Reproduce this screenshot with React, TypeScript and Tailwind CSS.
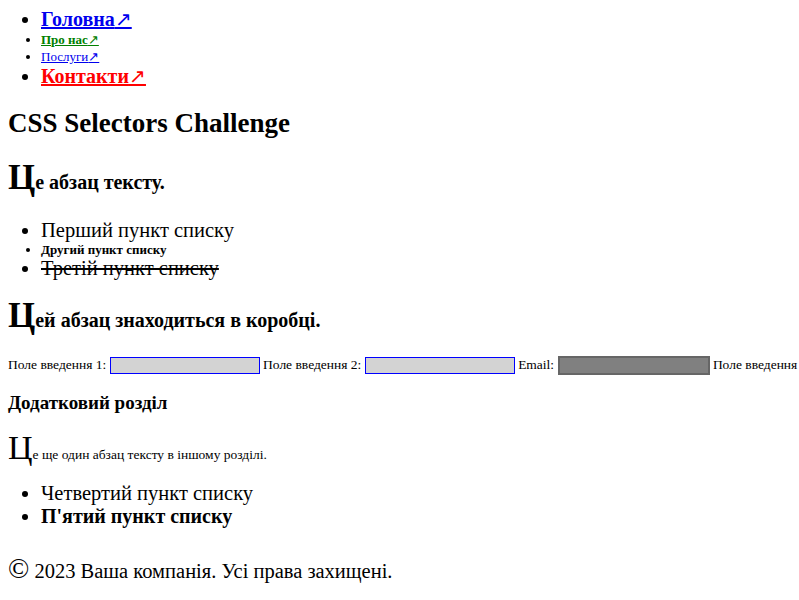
const serif = "font-['Liberation_Serif','Times_New_Roman',serif]";

function NavLink({ label, className }: { label: string; className: string }) {
  return (
    <a href="#" className={`underline ${className}`}>
      {label}
      <span className="font-normal">↗</span>
    </a>
  );
}

export default function App() {
  return (
    <div className={`${serif} p-2 text-black overflow-hidden`}>
      <nav>
        <ul className="list-disc pl-[33px]">
          <li className="text-[20px] leading-[23px] font-bold">
            <NavLink label="Головна" className="text-[#0000ee]" />
          </li>
          <li className="text-[13px] leading-[17px] font-bold">
            <NavLink label="Про нас" className="text-[#008000]" />
          </li>
          <li className="text-[13px] leading-[17px]">
            <NavLink label="Послуги" className="text-[#0000ee]" />
          </li>
          <li className="text-[20px] leading-[23px] font-bold">
            <NavLink label="Контакти" className="text-[#ff0000]" />
          </li>
        </ul>
      </nav>

      <h1 className="text-[27px] leading-[31px] font-bold mt-[20px] mb-[21px]">CSS Selectors Challenge</h1>

      <p className="text-[20px] leading-[23px] font-bold mb-[23px]">
        <span className="text-[35px] leading-[36px]">Ц</span>е абзац тексту.
      </p>

      <ul className="list-disc pl-[33px] mb-[18px]">
        <li className="text-[20.5px] leading-[23px]">Перший пункт списку</li>
        <li className="text-[13px] leading-[15px] font-bold">Другий пункт списку</li>
        <li className="text-[20.5px] leading-[23px] line-through">Третій пункт списку</li>
      </ul>

      <div className="text-[20px] leading-[23px] font-bold mb-[21px]">
        <p>
          <span className="text-[35px] leading-[36px]">Ц</span>ей абзац знаходиться в коробці.
        </p>
      </div>

      <form className="text-[13.5px] whitespace-nowrap">
        <label>Поле введення 1:</label>{" "}
        <input type="text" className="inline-block align-middle w-[150px] h-[17px] bg-[#d3d3d3] border border-[#0000ff]" />{" "}
        <label>Поле введення 2:</label>{" "}
        <input type="text" className="inline-block align-middle w-[150px] h-[17px] bg-[#d3d3d3] border border-[#0000ff]" />{" "}
        <label>Email:</label>{" "}
        <input type="email" className="inline-block align-middle w-[152px] h-[19px] bg-[#808080] border-2 border-[#666666]" />{" "}
        <label>Поле введення 3:</label>
      </form>

      <section>
        <h3 className="text-[19px] font-bold mt-[14px] mb-[4px]">Додатковий розділ</h3>
        <p className="text-[13.5px]">
          <span className="text-[34px]">Ц</span>е ще один абзац тексту в іншому розділі.
        </p>
        <ul className="list-disc pl-[33px] mt-[9px]">
          <li className="text-[20.5px] leading-[23px]">Четвертий пункт списку</li>
          <li className="text-[20px] leading-[23px] font-bold">П'ятий пункт списку</li>
        </ul>
      </section>

      <footer className="mt-[20px] text-[20.5px]">
        <p>
          <span className="text-[28px]">©</span> 2023 Ваша компанія. Усі права захищені.
        </p>
      </footer>
    </div>
  );
}
